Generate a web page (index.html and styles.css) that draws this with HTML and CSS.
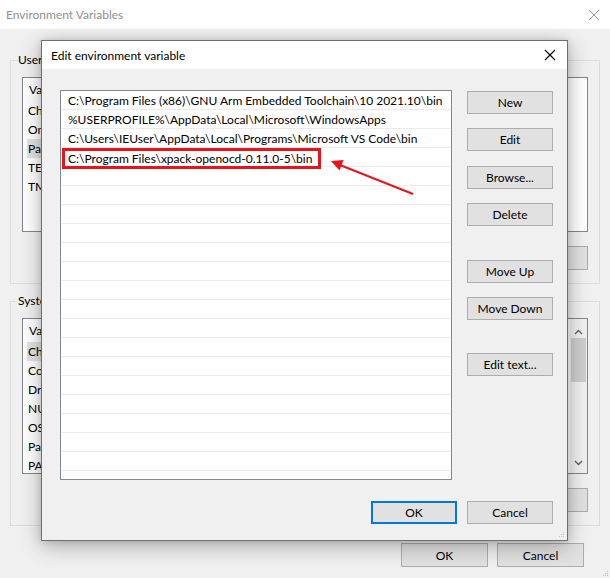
FILE: index.html
```html
<!DOCTYPE html>
<html>
<head>
<meta charset="utf-8">
<title>Edit environment variable</title>
<link rel="stylesheet" href="styles.css">
</head>
<body>
<div class="win">
  <div class="win-title">
    <span class="win-title-text">Environment Variables</span>
    <svg class="win-close" width="12" height="12" viewBox="0 0 12 12"><path d="M1 1L11 11M11 1L1 11" stroke="#9a9a9a" stroke-width="1" fill="none"/></svg>
  </div>
  <div class="win-body">
    <fieldset class="group">
      <legend>User</legend>
      <div class="lv lv-user">
        <div class="lv-head"><span class="c1">Va</span></div>
        <div class="lv-row"><span class="c1">Ch</span></div>
        <div class="lv-row"><span class="c1">On</span></div>
        <div class="lv-row"><span class="c1 lv-sel">Pa</span></div>
        <div class="lv-row"><span class="c1">TE</span></div>
        <div class="lv-row"><span class="c1">TM</span></div>
      </div>
      <div class="group-btns">
        <button class="btn"></button>
      </div>
    </fieldset>
    <fieldset class="group group-sys">
      <legend>Syste</legend>
      <div class="lv lv-sys">
        <div class="lv-main">
          <div class="lv-head"><span class="c1">Va</span></div>
          <div class="lv-row"><span class="c1 lv-sel">Ch</span></div>
          <div class="lv-row"><span class="c1">Co</span></div>
          <div class="lv-row"><span class="c1">Dr</span></div>
          <div class="lv-row"><span class="c1">NU</span></div>
          <div class="lv-row"><span class="c1">OS</span></div>
          <div class="lv-row"><span class="c1">Pa</span></div>
          <div class="lv-row"><span class="c1">PA</span></div>
        </div>
        <div class="sb">
          <svg class="sb-arrow" width="9" height="6" viewBox="0 0 9 6"><path d="M1 5L4.5 1.5L8 5" stroke="#606060" stroke-width="1.4" fill="none"/></svg>
          <div class="sb-track"><div class="sb-thumb"></div></div>
          <svg class="sb-arrow" width="9" height="6" viewBox="0 0 9 6"><path d="M1 1L4.5 4.5L8 1" stroke="#606060" stroke-width="1.4" fill="none"/></svg>
        </div>
      </div>
      <div class="group-btns">
        <button class="btn"></button>
      </div>
    </fieldset>
    <div class="win-footer">
      <button class="btn btn-wide">OK</button>
      <button class="btn btn-wide">Cancel</button>
    </div>
  </div>
  <svg class="grip grip-win" width="7" height="7" viewBox="0 0 7 7"><g fill="#c4c4c4"><rect x="5" y="1" width="1" height="1"/><rect x="3" y="3" width="1" height="1"/><rect x="5" y="3" width="1" height="1"/><rect x="1" y="5" width="1" height="1"/><rect x="3" y="5" width="1" height="1"/><rect x="5" y="5" width="1" height="1"/></g></svg>
</div>

<div class="dlg">
  <div class="dlg-title">
    <span>Edit environment variable</span>
    <svg class="dlg-close" width="12" height="12" viewBox="0 0 12 12"><path d="M1 1L11 11M11 1L1 11" stroke="#000" stroke-width="1.1" fill="none"/></svg>
  </div>
  <div class="dlg-body">
    <div class="dlg-main">
      <div class="paths">
        <div class="path-row">C:\Program Files (x86)\GNU Arm Embedded Toolchain\10 2021.10\bin</div>
        <div class="path-row">%USERPROFILE%\AppData\Local\Microsoft\WindowsApps</div>
        <div class="path-row">C:\Users\IEUser\AppData\Local\Programs\Microsoft VS Code\bin</div>
        <div class="path-row"><span class="mark">C:\Program Files\xpack-openocd-0.11.0-5\bin</span></div>
        <div class="path-row"></div>
        <div class="path-row"></div>
        <div class="path-row"></div>
        <div class="path-row"></div>
        <div class="path-row"></div>
        <div class="path-row"></div>
        <div class="path-row"></div>
        <div class="path-row"></div>
        <div class="path-row"></div>
        <div class="path-row"></div>
        <div class="path-row"></div>
        <div class="path-row"></div>
        <div class="path-row"></div>
        <div class="path-row"></div>
        <div class="path-row"></div>
        <div class="path-row"></div>
        <div class="path-row"></div>
      </div>
      <div class="dlg-btns">
        <button class="btn dbtn">New</button>
        <button class="btn dbtn mb15">Edit</button>
        <button class="btn dbtn">Browse...</button>
        <button class="btn dbtn">Delete</button>
        <button class="btn dbtn gap-big">Move Up</button>
        <button class="btn dbtn">Move Down</button>
        <button class="btn dbtn gap-big2">Edit text...</button>
      </div>
    </div>
    <div class="dlg-footer">
      <button class="btn dbtn btn-default">OK</button>
      <button class="btn dbtn">Cancel</button>
    </div>
  </div>
  <svg class="grip grip-dlg" width="7" height="7" viewBox="0 0 7 7"><g fill="#c4c4c4"><rect x="5" y="1" width="1" height="1"/><rect x="3" y="3" width="1" height="1"/><rect x="5" y="3" width="1" height="1"/><rect x="1" y="5" width="1" height="1"/><rect x="3" y="5" width="1" height="1"/><rect x="5" y="5" width="1" height="1"/></g></svg>
</div>

<svg class="annot-arrow" width="95" height="45" viewBox="0 0 95 45">
  <line x1="88" y1="39" x2="15" y2="10" stroke="#e8141b" stroke-width="2"/>
  <polygon points="6,6 18.5,5 14.5,15.5" fill="#e8141b"/>
</svg>
</body>
</html>
```

FILE: styles.css
```css
* { box-sizing: border-box; }

html, body {
  margin: 0;
  padding: 0;
}

body {
  width: 610px;
  height: 578px;
  overflow: hidden;
  background: #f0f0f0;
  font-family: Lato, "Noto Sans", sans-serif;
  font-size: 12px;
  color: #000;
  position: relative;
}

button {
  font-family: inherit;
  font-size: 12px;
  color: #000;
}

/* ---------- background window ---------- */
.win {
  height: 578px;
  display: flex;
  flex-direction: column;
  position: relative;
}

.win-title {
  height: 29px;
  flex: none;
  background: #fff;
  display: flex;
  align-items: center;
  justify-content: space-between;
  padding: 0 10px 0 6px;
  color: #8f8f8f;
}

.win-body {
  padding: 0 10px;
  display: flex;
  flex-direction: column;
}

.group {
  margin: 23px 0 0;
  padding: 0 11px 13px;
  border: 1px solid #dcdcdc;
  min-width: 0;
}

.group-sys {
  margin-top: 9px;
}

.group legend {
  padding: 0 1px;
  margin-left: -5px;
  height: 16px;
  line-height: 16px;
}

.lv {
  margin-top: 9px;
  border: 1px solid #828790;
  background: #fff;
  overflow: hidden;
}

.lv-user {
  height: 155px;
}

.lv-sys {
  height: 156px;
  display: flex;
}

.lv-main {
  flex: 1;
  min-width: 0;
}

.lv-head {
  height: 23px;
  display: flex;
  align-items: center;
  padding-left: 5px;
}

.lv-row {
  height: 19px;
  display: flex;
  align-items: stretch;
  margin-left: 4px;
  white-space: nowrap;
}

.c1 {
  display: flex;
  align-items: center;
  width: 190px;
  padding-left: 1px;
  flex: none;
}

.lv-sel {
  background: #e3e3e3;
}

.sb {
  width: 17px;
  flex: none;
  background: #f0f0f0;
  display: flex;
  flex-direction: column;
  align-items: center;
  padding: 10px 0 7px;
}

.sb-arrow {
  flex: none;
}

.sb-track {
  flex: 1;
  width: 100%;
  padding: 3px 0;
}

.sb-thumb {
  height: 44px;
  margin: 0 1px;
  background: #cdcdcd;
}

.group-btns {
  margin-top: 14px;
  display: flex;
  justify-content: flex-end;
  gap: 10px;
}

.btn {
  height: 24px;
  width: 86px;
  padding: 0;
  background: #e1e1e1;
  border: 1px solid #adadad;
  border-radius: 0;
}

.win-footer {
  margin-top: 17px;
  padding-right: 16px;
  display: flex;
  justify-content: flex-end;
  gap: 9px;
}

.btn-wide {
  width: 87px;
}

.grip {
  position: absolute;
  right: 1px;
  bottom: 1px;
}

/* ---------- dialog ---------- */
.dlg {
  position: absolute;
  left: 41px;
  top: 40px;
  width: 527px;
  height: 501px;
  border: 1px solid #6e6e6e;
  background: #f0f0f0;
  box-shadow: 0 5px 20px rgba(0, 0, 0, 0.3), 0 0 6px rgba(0, 0, 0, 0.12);
  display: flex;
  flex-direction: column;
}

.dlg-title {
  height: 28px;
  flex: none;
  background: #fff;
  display: flex;
  align-items: center;
  justify-content: space-between;
  padding: 0 11px 0 9px;
}

.dlg-body {
  flex: 1;
  padding: 21px 14px 0 18px;
  display: flex;
  flex-direction: column;
}

.dlg-main {
  display: flex;
  gap: 15px;
}

.paths {
  width: 392px;
  height: 390px;
  border: 1px solid #828790;
  background: #fff;
  overflow: hidden;
  position: relative;
}

.path-row {
  height: 19px;
  border-bottom: 1px solid #ebebeb;
  padding-left: 7px;
  display: flex;
  align-items: center;
  white-space: nowrap;
}

.mark {
  outline: 3px solid #e8141b;
  outline-offset: 0;
  padding: 0 6px 0 3px;
  margin-left: -3px;
  margin-top: 3px;
  line-height: 15px;
}

.dlg-btns {
  display: flex;
  flex-direction: column;
  padding-top: 1px;
}

.dbtn {
  width: 86px;
  height: 23px;
  margin-bottom: 14px;
}

.mb15 {
  margin-bottom: 15px;
}

.gap-big {
  margin-top: 20px;
}

.gap-big2 {
  margin-top: 19px;
}

.dlg-footer {
  margin-top: 21px;
  display: flex;
  justify-content: flex-end;
  gap: 10px;
}

.dlg-footer .dbtn {
  margin-bottom: 0;
}

.btn-default {
  border: 2px solid #0078d7;
}

.grip-dlg {
  right: 2px;
  bottom: 2px;
}

/* ---------- annotation arrow ---------- */
.annot-arrow {
  position: absolute;
  left: 325px;
  top: 155px;
}
```
